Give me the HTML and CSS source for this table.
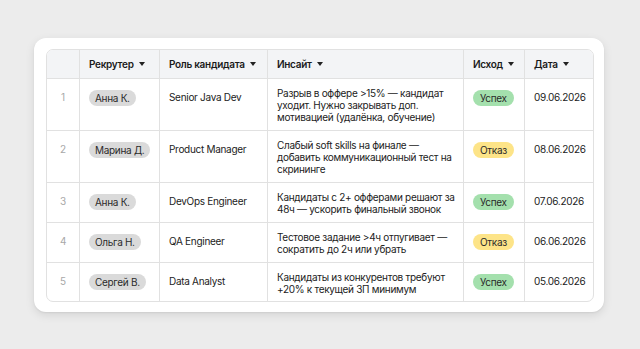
FILE: index.html
```html
<!DOCTYPE html>
<html lang="ru">
<head>
<meta charset="utf-8">
<link rel="stylesheet" href="styles.css">
</head>
<body>
<div class="card">
  <div class="grid">
    <div class="h num"></div>
    <div class="h">Рекрутер <svg class="tri" viewBox="0 0 6 4"><path d="M0 0H6L3 4Z"/></svg></div>
    <div class="h">Роль кандидата <svg class="tri" viewBox="0 0 6 4"><path d="M0 0H6L3 4Z"/></svg></div>
    <div class="h">Инсайт <svg class="tri" viewBox="0 0 6 4"><path d="M0 0H6L3 4Z"/></svg></div>
    <div class="h">Исход <svg class="tri" viewBox="0 0 6 4"><path d="M0 0H6L3 4Z"/></svg></div>
    <div class="h">Дата <svg class="tri" viewBox="0 0 6 4"><path d="M0 0H6L3 4Z"/></svg></div>

    <div class="c num">1</div>
    <div class="c"><span class="pill">Анна К.</span></div>
    <div class="c">Senior Java Dev</div>
    <div class="c ins">Разрыв в оффере &gt;15% — кандидат уходит. Нужно закрывать доп. мотивацией (удалёнка, обучение)</div>
    <div class="c"><span class="pill ok">Успех</span></div>
    <div class="c">09.06.2026</div>

    <div class="c num">2</div>
    <div class="c"><span class="pill">Марина Д.</span></div>
    <div class="c">Product Manager</div>
    <div class="c ins">Слабый soft skills на финале — добавить коммуникационный тест на скрининге</div>
    <div class="c"><span class="pill no">Отказ</span></div>
    <div class="c">08.06.2026</div>

    <div class="c num">3</div>
    <div class="c"><span class="pill">Анна К.</span></div>
    <div class="c">DevOps Engineer</div>
    <div class="c ins">Кандидаты с 2+ офферами решают за 48ч — ускорить финальный звонок</div>
    <div class="c"><span class="pill ok">Успех</span></div>
    <div class="c">07.06.2026</div>

    <div class="c num">4</div>
    <div class="c"><span class="pill">Ольга Н.</span></div>
    <div class="c">QA Engineer</div>
    <div class="c ins">Тестовое задание &gt;4ч отпугивает — сократить до 2ч или убрать</div>
    <div class="c"><span class="pill no">Отказ</span></div>
    <div class="c">06.06.2026</div>

    <div class="c num">5</div>
    <div class="c"><span class="pill">Сергей В.</span></div>
    <div class="c">Data Analyst</div>
    <div class="c ins">Кандидаты из конкурентов требуют +20% к текущей ЗП минимум</div>
    <div class="c"><span class="pill ok">Успех</span></div>
    <div class="c">05.06.2026</div>
  </div>
</div>
</body>
</html>
```

FILE: styles.css
```css
* { box-sizing: border-box; }
html, body { margin: 0; padding: 0; }
body {
  width: 640px;
  height: 349px;
  background: #ececec;
  font-family: Inter, "Noto Sans", sans-serif;
  font-size: 10px;
  letter-spacing: -0.3px;
  color: #222;
  padding: 38px 0 0 34px;
}
.card {
  width: 570px;
  height: 274px;
  background: #fff;
  border-radius: 12px;
  padding: 11px 10px 11px 12px;
  box-shadow: 0 3px 10px rgba(0,0,0,0.10), 0 1px 2px rgba(0,0,0,0.06);
}
.grid {
  display: grid;
  grid-template-columns: 32px 80px 108px 196px 61px 69px;
  grid-template-rows: 28px 52px 52px 40px 40px 39px;
  border: 1px solid #e1e1e1;
  border-radius: 7px;
  overflow: hidden;
}
.h {
  background: #f3f4f6;
  font-weight: 600;
  display: flex;
  align-items: center;
  gap: 5px;
  padding: 0 9px 1px;
  border-left: 1px solid #e1e1e1;
  color: #1a1a1a;
  white-space: nowrap;
}
.h.num { border-left: none; }
.tri { width: 6px; height: 4px; fill: #222; flex: none; }
.c {
  border-left: 1px solid #e1e1e1;
  border-top: 1px solid #e1e1e1;
  padding: 11px 9px 0;
  line-height: 14px;
  white-space: nowrap;
}
.c.num {
  border-left: none;
  text-align: center;
  color: #a8a8a8;
  padding-left: 0; padding-right: 0;
}
.c.ins {
  padding-top: 8px;
  line-height: 12px;
  padding-right: 6px;
  white-space: normal;
}
.pill {
  display: inline-block;
  background: #dadada;
  border-radius: 8px;
  padding: 0 6px;
  height: 16px;
  line-height: 16px;
  color: #2a2a2a;
}
.pill.ok { background: #a4e0ad; padding: 0 7px; }
.pill.no { background: #fde488; padding: 0 7px; }
```
